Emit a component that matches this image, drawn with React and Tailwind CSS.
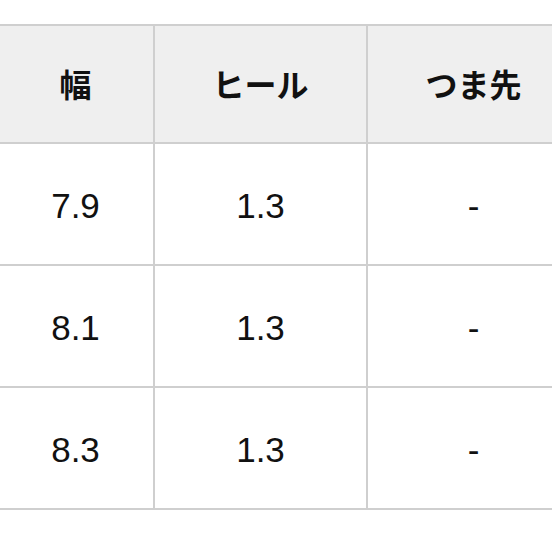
import React from 'react';

const headers = ['幅', 'ヒール', 'つま先'];
const rows = [
  ['7.9', '1.3', '-'],
  ['8.1', '1.3', '-'],
  ['8.3', '1.3', '-'],
];

const App = () => {
  return (
    <div
      className="w-[552px] h-[552px] overflow-hidden bg-white pt-[24px]"
      style={{ fontFamily: '"Liberation Sans", "Noto Sans CJK JP", sans-serif' }}
    >
      <div className="ml-[-4px] w-max grid grid-cols-[157px_213px_213px] border-t-2 border-l-2 border-[#cfcfcf] text-[#111]">
        {headers.map((h) => (
          <div
            key={h}
            className="h-[118px] pt-[3px] flex items-center justify-center bg-[#efefef] border-r-2 border-b-2 border-[#cfcfcf] text-[32px] font-bold"
          >
            {h}
          </div>
        ))}
        {rows.map((row, i) =>
          row.map((cell, j) => (
            <div
              key={`${i}-${j}`}
              className="h-[122px] pt-[5px] flex items-center justify-center bg-white border-r-2 border-b-2 border-[#cfcfcf] text-[35px]"
            >
              {cell}
            </div>
          ))
        )}
      </div>
    </div>
  );
};

export default App;
